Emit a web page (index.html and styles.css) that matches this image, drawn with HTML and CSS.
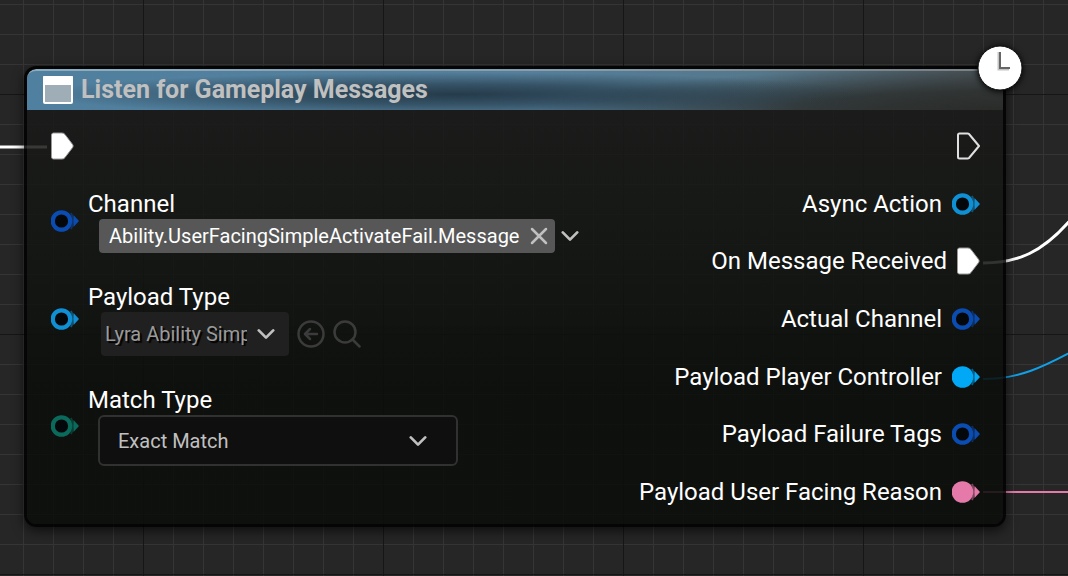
FILE: index.html
```
<!DOCTYPE html>
<html lang="en">

<head>
  <meta charset="UTF-8">
  <meta name="viewport" content="width=device-width, initial-scale=1" />
  <title>Listen for Gameplay Messages</title>
  <link rel="stylesheet" href="styles.css">
</head>

<body>
  <!-- shared shapes -->
  <svg class="defs" aria-hidden="true">
    <symbol id="pin-open" viewBox="0 0 28 22">
      <circle cx="10.500" cy="11" r="8.700" fill="#05080a" stroke="currentColor" stroke-width="4.200" />
      <path d="M20 3 Q24 11 20 19" fill="none" stroke="currentColor" stroke-width="2" opacity="0.5" />
      <path d="M22.500 5 L28 11 L22.500 17 Z" fill="currentColor" />
    </symbol>
    <symbol id="pin-full" viewBox="0 0 28 22">
      <circle cx="10.500" cy="11" r="10.800" fill="currentColor" />
      <path d="M20 3 Q24 11 20 19" fill="none" stroke="currentColor" stroke-width="2" opacity="0.5" />
      <path d="M22.500 5 L28 11 L22.500 17 Z" fill="currentColor" />
    </symbol>
    <symbol id="exec-full" viewBox="0 0 23 28">
      <path d="M0.500 3 Q0.500 1 2.500 1 H11 Q13 1 14 2.500 L22 13 V15 L14 25.500 Q13 27 11 27 H2.500 Q0.500 27 0.500 25 Z" fill="#fff" stroke="#999" stroke-width="1" />
    </symbol>
    <symbol id="exec-open" viewBox="0 0 23 28">
      <path d="M1 3 Q1 1.500 2.500 1.500 H10.500 Q11.500 1.500 12 2 L22 14 L12 26 Q11.500 26.500 10.500 26.500 H2.500 Q1 26.500 1 25 Z" fill="none" stroke="#e0e0e0" stroke-width="2" stroke-linejoin="round" />
    </symbol>
    <symbol id="chevron" viewBox="0 0 20 12">
      <path d="M2 2 L10 10 L18 2" fill="none" stroke="currentColor" stroke-width="3" stroke-linecap="round" stroke-linejoin="round" />
    </symbol>
  </svg>

  <main class="graph">
    <div class="node-wrap">
      <svg class="wire-in" viewBox="0 0 50 6" aria-hidden="true">
        <path d="M0 3 H50" stroke="#fff" stroke-width="3" />
      </svg>
      <svg class="wires-out" viewBox="0 0 90 300" aria-hidden="true">
        <path d="M0 63 C34 63 60 53 90 17" fill="none" stroke="#fff" stroke-width="3" />
        <path d="M0 179 C36 179 60 167 90 151" fill="none" stroke="#12a0e6" stroke-width="2" />
        <path d="M0 292 H90" fill="none" stroke="#e57aaa" stroke-width="2" />
      </svg>

      <section class="node">
        <header class="node-header">
          <svg class="node-icon" viewBox="0 0 30 28" aria-hidden="true">
            <rect x="1" y="1" width="28" height="26" rx="1" fill="#9fadb6" stroke="#fff" stroke-width="2" />
            <rect x="0" y="0" width="30" height="9" rx="1" fill="#fff" />
          </svg>
          <h1 class="node-title">Listen for Gameplay Messages</h1>
        </header>

        <div class="node-body">
          <div class="inputs">
            <div class="exec-row">
              <svg class="exec"><use href="#exec-full" /></svg>
            </div>

            <div class="input">
              <svg class="pin blue"><use href="#pin-open" /></svg>
              <div class="field">
                <label class="pin-label" for="channel-btn">Channel</label>
                <div class="channel">
                  <div class="tag">
                    <span>Ability.UserFacingSimpleActivateFail.Message</span>
                    <button class="icon-btn" type="button" aria-label="Clear tag">
                      <svg class="cross" viewBox="0 0 18 18">
                        <path d="M2 2 L16 16 M16 2 L2 16" stroke="currentColor" stroke-width="2.500" stroke-linecap="round" />
                      </svg>
                    </button>
                  </div>
                  <button class="icon-btn" id="channel-btn" type="button">
                    <svg class="chevron"><use href="#chevron" /></svg>
                  </button>
                </div>
              </div>
            </div>

            <div class="input">
              <svg class="pin cyan"><use href="#pin-open" /></svg>
              <div class="field">
                <label class="pin-label" for="payload-type">Payload Type</label>
                <div class="payload">
                  <div class="select payload-select">
                    <select id="payload-type">
                      <option>Lyra Ability Simple Failure Message</option>
                    </select>
                    <svg class="chevron"><use href="#chevron" /></svg>
                  </div>
                  <button class="icon-btn dim" type="button" aria-label="Use selected asset">
                    <svg class="tool" viewBox="0 0 28 28">
                      <circle cx="14" cy="14" r="12.500" fill="none" stroke="currentColor" stroke-width="2.500" />
                      <path d="M20 14 H8 M13 9 L8 14 L13 19" fill="none" stroke="currentColor" stroke-width="2.500" stroke-linecap="round" stroke-linejoin="round" />
                    </svg>
                  </button>
                  <button class="icon-btn dim" type="button" aria-label="Browse to asset">
                    <svg class="tool" viewBox="0 0 28 28">
                      <circle cx="12" cy="12" r="10.500" fill="none" stroke="currentColor" stroke-width="2.500" />
                      <path d="M19.500 19.500 L26.500 26.500" stroke="currentColor" stroke-width="2.500" stroke-linecap="round" />
                    </svg>
                  </button>
                </div>
              </div>
            </div>

            <div class="input">
              <svg class="pin teal"><use href="#pin-open" /></svg>
              <div class="field">
                <label class="pin-label" for="match-type">Match Type</label>
                <div class="select match-select">
                  <select id="match-type">
                    <option>Exact Match</option>
                  </select>
                  <svg class="chevron"><use href="#chevron" /></svg>
                </div>
              </div>
            </div>
          </div>

          <div class="outputs">
            <div class="output">
              <svg class="exec"><use href="#exec-open" /></svg>
            </div>
            <div class="output">Async Action<svg class="pin cyan"><use href="#pin-open" /></svg></div>
            <div class="output">On Message Received<svg class="exec"><use href="#exec-full" /></svg></div>
            <div class="output">Actual Channel<svg class="pin blue"><use href="#pin-open" /></svg></div>
            <div class="output">Payload Player Controller<svg class="pin sky"><use href="#pin-full" /></svg></div>
            <div class="output">Payload Failure Tags<svg class="pin blue"><use href="#pin-open" /></svg></div>
            <div class="output">Payload User Facing Reason<svg class="pin pink"><use href="#pin-full" /></svg></div>
          </div>
        </div>
      </section>

      <svg class="clock" viewBox="0 0 46 46" role="img" aria-label="Latent">
        <circle cx="23" cy="23" r="22" fill="#fff" stroke="#111" stroke-width="1" />
        <path d="M22 7 V24 H32" fill="none" stroke="#c4c4c4" stroke-width="3" />
        <path d="M23 7 V23 H33" fill="none" stroke="#666" stroke-width="2" />
      </svg>
    </div>
  </main>
</body>

</html>
```
FILE: styles.css
```
* {
  box-sizing: border-box;
}

body {
  margin: 0;
  font-family: Roboto, Arial, sans-serif;
  background-color: #262626;
  color: #fff;
}

.defs {
  display: none;
}

/* graph paper: dark line every 240px, light line every 30px */
.graph {
  min-height: 100vh;
  padding: 66px 62px 48px 24px;
  overflow: hidden;
  background-image:
    linear-gradient(to right, #161616 1px, transparent 1px),
    linear-gradient(to bottom, #161616 1px, transparent 1px),
    linear-gradient(to right, #353535 1px, transparent 1px),
    linear-gradient(to bottom, #353535 1px, transparent 1px);
  background-size: 240px 240px, 240px 240px, 30px 30px, 30px 30px;
  background-position: 143px 94px, 143px 94px, 23px 4px, 23px 4px;
}

.node-wrap {
  position: relative;
}

.wire-in,
.wires-out {
  position: absolute;
}

.wire-in {
  width: 50px;
  height: 6px;
  top: 78px;
  left: -27px;
}

.wires-out {
  width: 90px;
  height: 300px;
  top: 134px;
  left: 100%;
  margin-left: -23px;
}

.node {
  position: relative;
  border: 3px solid rgba(0, 0, 0, 0.85);
  border-radius: 12px;
  background: linear-gradient(to bottom, rgba(27, 27, 27, 0.86), rgba(22, 24, 21, 0.86) 25%, rgba(12, 14, 11, 0.88) 70%);
  background-clip: padding-box;
  box-shadow: 0 4px 12px rgba(0, 0, 0, 0.6);
  overflow: hidden;
}

.node-header {
  display: flex;
  align-items: center;
  gap: 8px;
  height: 41px;
  padding: 0 16px 2px;
  border-top: 2px solid rgba(200, 215, 225, 0.5);
  border-radius: 9px 0 0 0;
  background:
    radial-gradient(ellipse 420px 22px at 44% 60%, rgba(32, 52, 66, 0.9), rgba(32, 52, 66, 0.6) 45%, rgba(32, 52, 66, 0)),
    radial-gradient(ellipse 460px 42px at 100% 100%, #2a2c2a, rgba(42, 44, 42, 0.8) 45%, rgba(42, 44, 42, 0)),
    linear-gradient(to right, #50809f, #557f9b 50%, #55788c 75%, #474d50);
}

.node-icon {
  width: 30px;
  height: 28px;
}

.node-title {
  margin: 0;
  font-size: 25px;
  font-weight: 700;
  line-height: 32px;
  color: #c0c0c0;
}

.node-body {
  display: flex;
  justify-content: space-between;
  min-height: 414px;
  padding: 22px 23px 18px 24px;
}

.inputs {
  display: flex;
  flex-direction: column;
  gap: 29px;
}

.exec-row {
  height: 28px;
}

.exec {
  display: block;
  width: 23px;
  height: 28px;
}

.pin {
  flex: none;
  width: 28px;
  height: 22px;
}

.blue {
  color: #0a4cb0;
}

.cyan {
  color: #1090d4;
}

.sky {
  color: #00a8f6;
}

.teal {
  color: #0a6a5c;
}

.pink {
  color: #e57aaa;
}

.input {
  display: flex;
  align-items: center;
  gap: 9px;
}

.pin-label {
  display: block;
  font-size: 24px;
  line-height: 30px;
}

.channel,
.payload {
  display: flex;
  align-items: center;
}

.channel {
  gap: 6px;
  margin-left: 11px;
}

.payload {
  gap: 8px;
  margin-left: 13px;
}

.tag {
  display: flex;
  align-items: center;
  gap: 11px;
  height: 34px;
  padding: 0 7px 0 10px;
  border-radius: 4px;
  background-color: #575757;
  font-size: 20px;
}

.icon-btn {
  display: flex;
  padding: 0;
  border: none;
  background: none;
  color: #c0c0c0;
  cursor: pointer;
}

.dim {
  color: #3a3b3a;
}

.cross {
  width: 18px;
  height: 18px;
}

.chevron {
  width: 18px;
  height: 12px;
}

.tool {
  width: 28px;
  height: 28px;
}

.select {
  display: grid;
  align-items: center;
}

.select select,
.select .chevron {
  grid-area: 1 / 1;
}

.select .chevron {
  justify-self: end;
  color: #c0c0c0;
  pointer-events: none;
}

.select select {
  appearance: none;
  width: 100%;
  margin: 0;
  border: none;
  border-radius: 4px;
  font-family: inherit;
  font-size: 20px;
  color: #c0c0c0;
}

.payload-select select {
  width: 188px;
  height: 44px;
  padding: 0 42px 0 4px;
  background-color: #1f201f;
  color: #9a9a9a;
  text-shadow: 2px 2px 1px #000;
}

.payload-select .chevron {
  margin-right: 14px;
}

.match-select {
  width: 360px;
  margin-left: 10px;
}

.match-select select {
  height: 51px;
  padding: 0 18px;
  border: 2px solid #303130;
  border-radius: 6px;
  background-color: #0f0f0f;
}

.match-select .chevron {
  margin-right: 31px;
}

.outputs {
  display: flex;
  flex-direction: column;
  justify-content: space-between;
}

.output {
  display: flex;
  align-items: center;
  justify-content: flex-end;
  gap: 10px;
  height: 28px;
  font-size: 24px;
}

.clock {
  position: absolute;
  top: -21px;
  right: -17px;
  width: 46px;
  height: 46px;
  filter: drop-shadow(0 1px 3px #000);
}
```
